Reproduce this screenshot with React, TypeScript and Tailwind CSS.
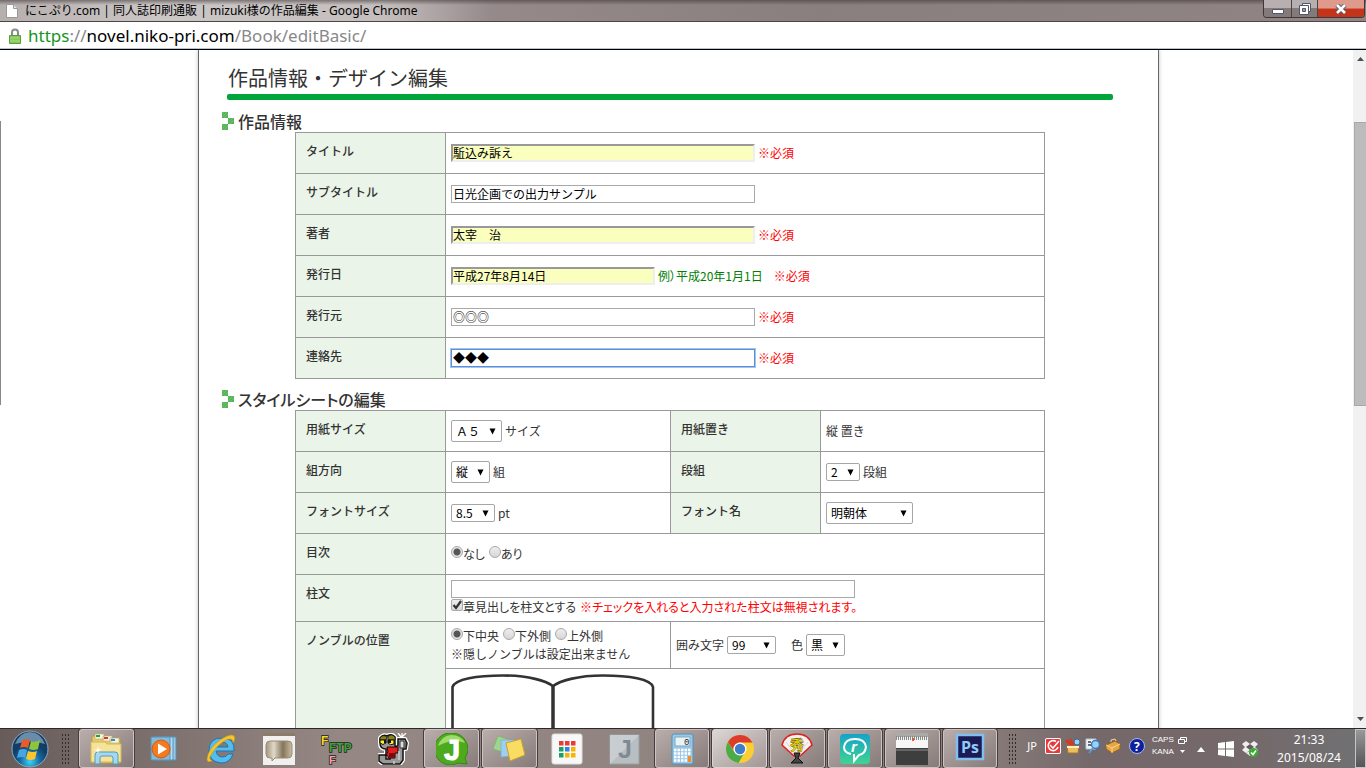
import { useState, type ReactNode } from "react";

const ICON = "h-8 w-8";

function FieldRow({ id, label, children }: { id: string; label: string; children: ReactNode }) {
	return (
		<tr className="h-[41px]">
			<HeadCell htmlFor={id}>{label}</HeadCell>
			<td className="border border-[#999] px-[5px] py-0">
				<div className="flex items-center gap-[3px]">{children}</div>
			</td>
		</tr>
	);
}

function HeadCell({ children, htmlFor, rowSpan }: { children: ReactNode; htmlFor?: string; rowSpan?: number }) {
	return (
		<th
			scope="row"
			rowSpan={rowSpan}
			className="border border-[#999] bg-[#ebf4e8] px-[10px] pt-[9px] text-left align-top font-medium"
		>
			{htmlFor ? <label htmlFor={htmlFor}>{children}</label> : children}
		</th>
	);
}

const Required = () => <span className="text-[#f00]">※必須</span>;

interface TextFieldProps {
	id: string;
	value: string;
	variant?: "plain" | "filled" | "focused";
	width?: string;
}

function TextField({ id, value, variant = "plain", width = "w-[304px]" }: TextFieldProps) {
	const look = {
		plain: "border border-[#a9a9a9] bg-white px-px pb-px",
		filled: "border-2 border-t-[#999] border-l-[#999] border-r-[#eee] border-b-[#eee] bg-[#faffbd] pb-px",
		focused: "border border-[#5b8ddb] bg-white px-px pb-px shadow-[0_0_0_1px_#a3c3f3]",
	}[variant];
	return (
		<input
			id={id}
			type="text"
			defaultValue={value}
			className={`block h-[18px] ${width} ${look} text-xs leading-[13px] text-black outline-none`}
		/>
	);
}

interface PickProps {
	id: string;
	options: string[];
	className: string;
}

// Native select with its own arrow
function Pick({ id, options, className }: PickProps) {
	return (
		<span className="relative inline-block">
			<select
				id={id}
				className={`block appearance-none rounded-[2px] border border-[#a6a6a6] bg-white py-0 pl-1 text-xs leading-4 text-black ${className}`}
			>
				{options.map((o) => (
					<option key={o}>{o}</option>
				))}
			</select>
			<svg className="pointer-events-none absolute inset-y-0 right-[6px] my-auto h-[7px] w-[7px]" viewBox="0 0 7 7">
				<path d="M0.500 0.500h6L3.500 6.500z" fill="#000" />
			</svg>
		</span>
	);
}

function Radio({ name, label, checked }: { name: string; label: string; checked?: boolean }) {
	return (
		<label className="flex items-start">
			<input
				type="radio"
				name={name}
				defaultChecked={checked}
				className="mt-px h-3 w-3 appearance-none rounded-full border border-[#aaa] bg-linear-to-b from-[#eee] to-[#d6d6d6] checked:bg-[radial-gradient(circle,#555_0_3px,#e2e2e2_4px)]"
			/>
			{label}
		</label>
	);
}

function SectionTitle({ children }: { children: ReactNode }) {
	return (
		<h2 className="ml-[23px] flex h-[22px] items-center gap-1 text-base leading-[22px] font-medium">
			<svg width="12" height="18" viewBox="0 0 12 18">
				<path d="M0 0h6v6H0zM6 6h6v6H6zM0 12h6v6H0z" fill="#55b357" />
				<path d="M0 2l2-2M0 5l5-5M2 6l4-4M6 8l2-2M6 11l5-5M8 12l4-4M0 14l2-2M0 17l5-5M2 18l4-4" stroke="#79c878" strokeWidth=".7" />
			</svg>
			<span className="[font-feature-settings:'palt']">{children}</span>
		</h2>
	);
}

function TitleBar() {
	return (
		<header className="flex h-[22px] shrink-0 items-start border-b border-[#4b4545] bg-[linear-gradient(to_bottom,rgba(60,50,50,.55),rgba(255,255,255,0)_5px),linear-gradient(to_right,#b5afae,#cbc7c6_12%,#c4bfbe_28%,#95898a_36%,#8a7f7f_60%,#908484)]">
			<svg className="mt-1 ml-[6px] h-[14px] w-3" viewBox="0 0 12 14">
				<path d="M.5.5h7l4 4v9H.5z" fill="#fff" stroke="#999" />
				<path d="M7.5.5v4h4" fill="#e5e5e5" stroke="#999" />
			</svg>
			<h1 className="ml-[7px] flex-1 text-xs leading-[21px] text-black [font-family:'Noto_Sans','Noto_Sans_CJK_JP',sans-serif]">
				にこぷり.com | 同人誌印刷通販 | mizuki様の作品編集 - Google Chrome
			</h1>
			<div className="mr-px flex h-[18px] overflow-hidden rounded-b-[4px] border border-t-0 border-[#3f3838]">
				<button aria-label="最小化" className="flex w-[28px] items-center justify-center border-r border-[#4c4444] bg-linear-to-b from-[#b8b0b0] from-50% to-[#857a7a] to-50%">
					<svg width="12" height="12" viewBox="0 0 12 12">
						<path d="M.5 6.5h11v4H.5z" fill="#fff" stroke="#51576c" />
					</svg>
				</button>
				<button aria-label="元に戻す" className="flex w-[26px] items-center justify-center border-r border-[#4c4444] bg-linear-to-b from-[#b8b0b0] from-50% to-[#857a7a] to-50%">
					<svg width="12" height="12" viewBox="0 0 12 12">
						<path d="M3.500.5h8v8h-8z" fill="#fff" stroke="#51576c" />
						<path d="M.5 2.500h9v9h-9z" fill="#fff" stroke="#51576c" />
						<path d="M3.500 5.500h3v3h-3z" fill="#a8a0a5" stroke="#51576c" />
					</svg>
				</button>
				<button aria-label="閉じる" className="flex w-[46px] items-center justify-center bg-linear-to-b from-[#e09a8c] from-45% to-[#c4341a] to-55%">
					<svg width="12" height="10" viewBox="0 0 12 10">
						<path d="M2 1l8 8M10 1L2 9" stroke="#51576c" strokeWidth="4.500" />
						<path d="M2 1l8 8M10 1L2 9" stroke="#fff" strokeWidth="2.600" />
					</svg>
				</button>
			</div>
		</header>
	);
}

function AddressBar() {
	return (
		<div className="flex h-7 shrink-0 items-center border-b border-black bg-white pl-[9px] text-[17px] leading-[26px] text-[#888] shadow-[inset_0_-1px_0_#b9c3d2] [font-family:'Noto_Sans',sans-serif]">
			<svg className="mr-[7px] h-4 w-3" viewBox="0 0 12 16">
				<path d="M3 8V4.500a3 3 0 0 1 6 0V8" fill="none" stroke="#8a8a8a" strokeWidth="2" />
				<path d="M.5 7.500h11v8H.5z" fill="#86c95b" stroke="#5f9c3c" />
				<path d="M1 10h10M1 13h10" stroke="#a4dc80" />
			</svg>
			<p>
				<span className="text-[#12951d]">https</span>://<span className="text-black">novel.niko-pri.com</span>/Book/editBasic/
			</p>
		</div>
	);
}

function ScrollBar() {
	return (
		<div className="flex w-[13px] shrink-0 flex-col bg-[#f1f1f1]">
			<svg className="mt-[7px] ml-1 h-1 w-[7px]" viewBox="0 0 7 4">
				<path d="M0 4L3.500 0 7 4z" fill="#505050" />
			</svg>
			<div className="mt-[61px] ml-px h-[284px] border border-r-0 border-[#a8a8a8] bg-[#bcbcbc]" />
			<svg className="mt-auto mb-[7px] ml-1 h-1 w-[7px]" viewBox="0 0 7 4">
				<path d="M0 0h7L3.500 4z" fill="#505050" />
			</svg>
		</div>
	);
}

function BookInfo() {
	return (
		<table className="ml-[96px] w-[750px] table-fixed border-collapse">
			<colgroup>
				<col className="w-[150px]" />
				<col />
			</colgroup>
			<tbody>
				<FieldRow id="title" label="タイトル">
					<TextField id="title" value="駈込み訴え" variant="filled" />
					<Required />
				</FieldRow>
				<FieldRow id="subtitle" label="サブタイトル">
					<TextField id="subtitle" value="日光企画での出力サンプル" />
				</FieldRow>
				<FieldRow id="author" label="著者">
					<TextField id="author" value="太宰　治" variant="filled" />
					<Required />
				</FieldRow>
				<FieldRow id="date" label="発行日">
					<TextField id="date" value="平成27年8月14日" variant="filled" width="w-[204px]" />
					<span className="mr-2 text-[#008000] [font-feature-settings:'palt']">例）平成20年1月1日</span>
					<Required />
				</FieldRow>
				<FieldRow id="publisher" label="発行元">
					<TextField id="publisher" value="◎◎◎" />
					<Required />
				</FieldRow>
				<FieldRow id="contact" label="連絡先">
					<TextField id="contact" value="◆◆◆" variant="focused" />
					<Required />
				</FieldRow>
			</tbody>
		</table>
	);
}

function StyleSheetForm() {
	const [useHeading, setUseHeading] = useState(true);
	const cell = "border border-[#999] px-[5px] py-0";
	const line = "flex items-center gap-[3px]";

	return (
		<table className="ml-[96px] w-[750px] table-fixed border-collapse">
			<colgroup>
				<col className="w-[150px]" />
				<col className="w-[225px]" />
				<col className="w-[150px]" />
				<col />
			</colgroup>
			<tbody>
				<tr className="h-[41px]">
					<HeadCell htmlFor="paper">用紙サイズ</HeadCell>
					<td className={cell}>
						<div className={line}>
							<Pick id="paper" options={["Ａ５", "Ａ６", "Ｂ５"]} className="h-[22px] w-[51px]" />
							サイズ
						</div>
					</td>
					<HeadCell>用紙置き</HeadCell>
					<td className={cell}>縦 置き</td>
				</tr>
				<tr className="h-[41px]">
					<HeadCell htmlFor="direction">組方向</HeadCell>
					<td className={cell}>
						<div className={line}>
							<Pick id="direction" options={["縦", "横"]} className="h-[22px] w-[39px]" />
							組
						</div>
					</td>
					<HeadCell htmlFor="columns">段組</HeadCell>
					<td className={cell}>
						<div className={line}>
							<Pick id="columns" options={["2", "1"]} className="h-[18px] w-[34px]" />
							段組
						</div>
					</td>
				</tr>
				<tr className="h-[41px]">
					<HeadCell htmlFor="size">フォントサイズ</HeadCell>
					<td className={cell}>
						<div className={line}>
							<Pick id="size" options={["8.5", "9", "10"]} className="h-[18px] w-[44px]" />
							pt
						</div>
					</td>
					<HeadCell htmlFor="font">フォント名</HeadCell>
					<td className={cell}>
						<div className={line}>
							<Pick id="font" options={["明朝体", "ゴシック体"]} className="h-[22px] w-[87px]" />
						</div>
					</td>
				</tr>
				<tr className="h-[41px]">
					<HeadCell>目次</HeadCell>
					<td colSpan={3} className={cell}>
						<div className="flex gap-1 [font-feature-settings:'palt']">
							<Radio name="toc" label="なし" checked />
							<Radio name="toc" label="あり" />
						</div>
					</td>
				</tr>
				<tr className="h-[47px]">
					<HeadCell htmlFor="header">柱文</HeadCell>
					<td colSpan={3} className={cell}>
						<TextField id="header" value="" width="w-[404px]" />
						<div className="flex gap-1 [font-feature-settings:'palt']">
							<label className="flex items-start">
								<span className="relative mt-px flex">
									<input
										type="checkbox"
										checked={useHeading}
										onChange={() => setUseHeading(!useHeading)}
										className="h-3 w-3 appearance-none rounded-[2px] border border-[#aaa] bg-linear-to-b from-[#eee] to-[#d8d8d8]"
									/>
									{useHeading && (
										<svg className="pointer-events-none absolute inset-0 h-3 w-3" viewBox="0 0 12 12">
											<path d="M2.500 6l2.500 3L10 2" fill="none" stroke="#333" strokeWidth="2.200" />
										</svg>
									)}
								</span>
								章見出しを柱文とする
							</label>
							<span className="text-[#f00]">※チェックを入れると入力された柱文は無視されます。</span>
						</div>
					</td>
				</tr>
				<tr className="h-[47px]">
					<HeadCell rowSpan={2}>ノンブルの位置</HeadCell>
					<td className={cell}>
						<div className="flex gap-1">
							<Radio name="folio" label="下中央" checked />
							<Radio name="folio" label="下外側" />
							<Radio name="folio" label="上外側" />
						</div>
						<p>※隠しノンブルは設定出来ません</p>
					</td>
					<td colSpan={2} className={cell}>
						<div className={line}>
							<label htmlFor="frame">囲み文字</label>
							<Pick id="frame" options={["99", "-99-"]} className="h-[18px] w-[49px]" />
							<label htmlFor="color" className="ml-3">色</label>
							<Pick id="color" options={["黒", "白"]} className="h-[22px] w-[39px]" />
						</div>
					</td>
				</tr>
				<tr>
					<td colSpan={3} className="border border-[#999] p-[5px]">
						<svg width="204" height="150" viewBox="0 0 204 150" fill="none" stroke="#333" strokeWidth="2.600">
							<path d="M1.500 148V13C4 5 26 1.500 52 1.500S95 7 102 12c7-5 24-10.500 50-10.500S200 5 202 13v135z" />
							<path d="M102 12v136" strokeWidth="3.500" />
						</svg>
					</td>
				</tr>
			</tbody>
		</table>
	);
}

function ExplorerIcon() {
	return (
		<svg className={ICON} viewBox="0 0 32 32">
			<path d="M2 3h9l2 2h17v25H2z" fill="#e7ca6a" stroke="#b99b45" />
			<path d="M5 1h9v5H5zM13 3h9v5h-9zM20 5h9v5h-9z" fill="#f8f4dc" stroke="#baa869" strokeWidth=".6" />
			<path d="M6 2h4v2H6z" fill="#20a43a" />
			<path d="M14 4h4v2h-4z" fill="#d8392b" />
			<path d="M21 6h4v2h-4z" fill="#2c8ed8" />
			<path d="M1 9h14l2 2h14v18H1z" fill="#f7e398" stroke="#d2b65c" />
			<path d="M5 31V22q0-3 3-3h17q3 0 3 3v9h-5v-6q0-2-2-2H12q-2 0-2 2v6z" fill="#a5d8ef" stroke="#4d9dc4" />
			<path d="M8 13l.8 3.200L12 17l-3.200.8L8 21l-.8-3.200L4 17l3.200-.8z" fill="#fff" />
		</svg>
	);
}

function MediaIcon() {
	return (
		<svg className={ICON} viewBox="0 0 32 32">
			<path d="M9 4h19v23H9z" fill="#9dc7df" stroke="#5592b6" />
			<path d="M6 4h19v23H6z" fill="#b9dcee" stroke="#5592b6" />
			<path d="M3 4h19v23H3z" fill="#86b9d6" stroke="#5592b6" />
			<circle cx="13" cy="16" r="9" fill="#f47a20" stroke="#d35a10" />
			<path d="M10 10.500v11l9-5.500z" fill="#fff" />
		</svg>
	);
}

function ExplorerEIcon() {
	return (
		<svg className={ICON} viewBox="0 0 32 32">
			<path d="M29 18H11q1 6 6.500 6 4 0 5.500-3h5q-3 9-11.500 9Q4 29 4 17.500 4 5 17 5q13 0 12 13zM11 14h12q-1-5-6-5t-6 5z" fill="#55bdee" stroke="#1878b8" />
			<path d="M7 28q-5 2-5-2Q3 16 15 7q11-7 14-4 2 2-1 7 0-6-7-3Q10 13 5 24q-1 2 2 4z" fill="#f5c62c" stroke="#cd9310" strokeWidth=".6" />
		</svg>
	);
}

function BubbleIcon() {
	return (
		<svg className={ICON} viewBox="0 0 32 32">
			<defs>
				<linearGradient id="bubble">
					<stop stopColor="#a3947e" />
					<stop offset=".3" stopColor="#e0d8c8" />
					<stop offset=".65" stopColor="#85745b" />
					<stop offset="1" stopColor="#c9bca6" />
				</linearGradient>
			</defs>
			<path d="M0 0h32v32H0z" fill="#f1f0ef" />
			<path d="M0 0h32v3H0z" fill="#8b7b69" />
			<path d="M7 8h18q4 0 4 4v9q0 4-4 4H12l-3 3v-3H7q-4 0-4-4v-9q0-4 4-4z" fill="url(#bubble)" stroke="#998b76" />
		</svg>
	);
}

function FtpIcon() {
	return (
		<svg className={ICON} viewBox="0 0 32 32" fontFamily="Liberation Sans" fontWeight="bold" stroke="#222" paintOrder="stroke" strokeWidth="1.500">
			<text x="0" y="12" fontSize="12" fill="#f6dc20">F</text>
			<text x="8" y="19" fontSize="12" fill="#3aa535">FTP</text>
			<text x="8" y="31" fontSize="11" fill="#f3a1ab">F</text>
		</svg>
	);
}

function WormIcon() {
	return (
		<svg className={ICON} viewBox="0 0 32 32">
			<path d="M2 5q3-4 7-2 5-3 8 1v9q2 1 3-1V6h7l2 4-1 6h-3v11l-3 4H5l-4-3v-6h7v4h4v-4H8v-6q-6 0-6-6z" fill="#999" stroke="#fff" strokeWidth="4" strokeLinejoin="round" />
			<path d="M2 5q3-4 7-2 5-3 8 1v9q2 1 3-1V6h7l2 4-1 6h-3v11l-3 4H5l-4-3v-6h7v4h4v-4H8v-6q-6 0-6-6z" fill="#999" stroke="#111" strokeWidth="1.500" />
			<path d="M2 5q3-4 7-1l-1 3H2zM10 4q3-4 7 0v3h-7z" fill="#8b8413" stroke="#111" strokeWidth=".7" />
			<path d="M2 7h6v3q-3 3-6 0zM10 7h6v4q-4 2-6-1z" fill="#fff12a" stroke="#111" />
			<path d="M6 7h2v3H6zM10 7h3v3h-3z" fill="#111" />
			<path d="M9 14h11v6h-3v5h-7v-2l-2-1 2-3z" fill="#e22020" stroke="#300" />
			<path d="M11 20h6v4h-6z" fill="#770c0c" />
			<path d="M20 0l3 4M28 0l-4 4M24 0v5" stroke="#fff" strokeWidth="1.300" />
			<path d="M22 8h4v7h-4zM20 9v5M28 9v5" fill="#ddd" stroke="#333" />
			<path d="M21 18v9M16 28v3" stroke="#ccc" strokeWidth="1.500" />
		</svg>
	);
}

function GreenJIcon() {
	return (
		<svg className={ICON} viewBox="0 0 32 32">
			<path d="M16 0a16 16 0 1 0 6 30l9 1-2-6A16 16 0 0 0 16 0z" fill="#4daa1f" stroke="#39870f" />
			<path d="M2 13Q5 3 15 2q10 0 14 8-12-5-27 3z" fill="#9ddb6a" />
			<text x="8" y="27" fontSize="29" fontFamily="Liberation Sans" fontWeight="bold" fill="#fff" stroke="#fff">J</text>
		</svg>
	);
}

function NotesIcon() {
	return (
		<svg className={ICON} viewBox="0 0 32 32">
			<path d="M5 3l12 4-4 13-13-4z" fill="#9fd68e" stroke="#74ae64" strokeWidth=".6" />
			<path d="M8 7h14v16l-14 1z" fill="#9fcff0" stroke="#6fa9d0" strokeWidth=".6" />
			<path d="M13 10l15-4 4 16-15 6z" fill="#f8dd62" stroke="#ca9f32" />
		</svg>
	);
}

function AppsIcon() {
	const colors = ["#ea3a34", "#ea3a34", "#ea3a34", "#1aa260", "#2a85e8", "#f8b400", "#1aa260", "#f8b400", "#f8b400"];
	return (
		<svg className={ICON} viewBox="0 0 32 32">
			<rect x="1" y="1" width="30" height="30" rx="2" fill="#f8f8f8" stroke="#ddd" />
			{colors.map((c, i) => (
				<rect key={i} x={8 + (i % 3) * 6} y={8 + Math.floor(i / 3) * 6} width="4.500" height="4.500" fill={c} />
			))}
		</svg>
	);
}

function GrayJIcon() {
	return (
		<svg className={ICON} viewBox="0 0 32 32">
			<path d="M2 2h29v29H2z" fill="#b8bec2" stroke="#9aa0a4" />
			<path d="M2 2h29L2 31z" fill="#c8cdd1" />
			<text x="10" y="25" fontSize="25" fontFamily="Liberation Sans" fontWeight="bold" fill="#7f8a92">J</text>
		</svg>
	);
}

function CalcIcon() {
	return (
		<svg className={ICON} viewBox="0 0 32 32">
			<rect x="6" y="1" width="21" height="30" rx="2" fill="#9cc8e6" stroke="#5390bb" />
			<path d="M9 4h15v9H9z" fill="#eaf3f3" stroke="#78a8c5" />
			<text x="18" y="12" fontSize="9" fontFamily="Liberation Mono" fill="#223">0</text>
			<path d="M8 17h17M8 20.500h17M8 24h17M8 27.500h14" stroke="#fff" strokeWidth="2.500" strokeDasharray="2.500 1" />
			<path d="M22 23h3v6h-3z" fill="#f09020" />
		</svg>
	);
}

function ChromeIcon() {
	return (
		<svg className={ICON} viewBox="0 0 32 32">
			<circle cx="16" cy="16" r="14" fill="#fbce32" />
			<path d="M3.900 9A14 14 0 0 1 28.500 9.500H16a6.500 6.500 0 0 0-6.300 8z" fill="#dd3b2d" />
			<path d="M3.900 9a14 14 0 0 0 10.600 21l6-10.500a6.500 6.500 0 0 1-10.500-1z" fill="#4aab48" />
			<circle cx="16" cy="16" r="6.500" fill="#fff" />
			<circle cx="16" cy="16" r="5.200" fill="#3d7dcb" />
		</svg>
	);
}

function FanIcon() {
	return (
		<svg className={ICON} viewBox="0 0 32 32">
			<path d="M1 12Q4 1 16 1t15 11L19 23h-6z" fill="#f7f1f1" stroke="#d22" strokeWidth="1.500" />
			<path d="M16 23L5 9M16 23L10 5M16 23V4M16 23l6-18M16 23L27 9" stroke="#ccc" strokeWidth=".7" />
			<path d="M13 20h6l-2 5 5 5H10l5-5z" fill="#444" stroke="#111" />
			<text x="9" y="17" fontSize="14" fontFamily="Noto Sans CJK JP" fontWeight="bold" fill="#f2df00" stroke="#554800" strokeWidth=".4">秀</text>
		</svg>
	);
}

function RealIcon() {
	return (
		<svg className={ICON} viewBox="0 0 32 32">
			<defs>
				<linearGradient id="teal" x2="0" y2="1">
					<stop stopColor="#16a3c8" />
					<stop offset="1" stopColor="#40d392" />
				</linearGradient>
			</defs>
			<rect x="1" y="1" width="30" height="30" rx="4" fill="url(#teal)" />
			<path d="M12 21Q5 20 5 14q1-8 11-8t11 8q-1 7-7 8l-5 6v-7" fill="none" stroke="#fff" strokeWidth="2" />
			<text x="12" y="19" fontSize="15" fontFamily="Liberation Sans" fontStyle="italic" fontWeight="bold" fill="#fff">r</text>
		</svg>
	);
}

function RulerIcon() {
	return (
		<svg className={ICON} viewBox="0 0 32 32">
			<path d="M0 0h32v15H0z" fill="#f7f7f7" />
			<path d="M0 0h32v4H0z" fill="#aaa" />
			<path d="M0 5h32" stroke="#888" strokeWidth="4" strokeDasharray="1 1" />
			<path d="M16 5h2v3h-2z" fill="#e65a2a" />
			<path d="M0 15h32v17H0z" fill="#3e3e3e" />
			<path d="M0 16h32v2H0z" fill="#666" />
		</svg>
	);
}

function PsIcon() {
	return (
		<svg className={ICON} viewBox="0 0 32 32">
			<path d="M3 2h26v24H3z" fill="#1b1a55" stroke="#7fc0f0" strokeWidth="2.500" />
			<text x="7" y="20" fontSize="16" fontFamily="Open Sans" fontWeight="bold" fill="#8ecbf5">Ps</text>
		</svg>
	);
}

const apps: { name: string; icon: () => ReactNode; state?: "open" | "active" }[] = [
	{ name: "エクスプローラー", icon: ExplorerIcon, state: "open" },
	{ name: "Media Player", icon: MediaIcon },
	{ name: "Internet Explorer", icon: ExplorerEIcon },
	{ name: "吹き出し", icon: BubbleIcon },
	{ name: "FFFTP", icon: FtpIcon },
	{ name: "エディタ", icon: WormIcon },
	{ name: "Jane", icon: GreenJIcon, state: "open" },
	{ name: "付箋", icon: NotesIcon, state: "open" },
	{ name: "アプリ", icon: AppsIcon },
	{ name: "J", icon: GrayJIcon },
	{ name: "電卓", icon: CalcIcon, state: "open" },
	{ name: "Chrome", icon: ChromeIcon, state: "active" },
	{ name: "秀丸", icon: FanIcon, state: "open" },
	{ name: "リアル", icon: RealIcon, state: "open" },
	{ name: "ルーラー", icon: RulerIcon, state: "open" },
	{ name: "Photoshop", icon: PsIcon, state: "open" },
];

function Grip() {
	return <div className="mt-1 h-8 w-[9px] bg-[radial-gradient(circle,#332b2b_1px,transparent_1px)] bg-size-[3px_4px]" />;
}

function TaskBar() {
	const look = {
		none: "border-transparent",
		open: "border-[#cdc3c2] bg-linear-to-br from-[#b9aeac] to-[#877b79] shadow-[0_0_0_1px_#463e3e]",
		active: "border-[#ddd5d4] bg-linear-to-br from-[#dcd7d6] to-[#a29694] shadow-[0_0_0_1px_#463e3e]",
	};
	return (
		<footer className="flex h-10 shrink-0 border-t border-[#2d2727] bg-[linear-gradient(to_right,#685c5a,#958884_25%,#8c807d_70%,#75686a_80%,#75686a_90%,#707173)] text-white">
			<button aria-label="スタート" className="ml-[11px]">
				<svg width="38" height="38" viewBox="0 0 38 38">
					<defs>
						<radialGradient id="orb" cy=".85">
							<stop stopColor="#3dd4f6" />
							<stop offset=".55" stopColor="#176aa3" />
							<stop offset="1" stopColor="#123d65" />
						</radialGradient>
					</defs>
					<circle cx="19" cy="19" r="18" fill="url(#orb)" stroke="#8aabc0" />
					<path d="M4 14Q9 2 19 2t15 12q-14-5-30 0z" fill="#a4c1d5" opacity=".6" />
					<path d="M11 11q4-3 8-1l-2 8q-4-2-8 0z" fill="#ee5a25" />
					<path d="M20 11q4 2 9-1l-2 9q-4 2-9 0z" fill="#8cc63c" />
					<path d="M8 20q4-2 8 0l-2 8q-3-2-8 0z" fill="#4aa4e2" />
					<path d="M17 21q5 2 9 0l-2 8q-4 2-9 0z" fill="#fbc62c" />
				</svg>
			</button>
			<div className="ml-3">
				<Grip />
			</div>
			<nav className="ml-[9px] flex min-w-0 flex-1 gap-[3px]">
				{apps.map(({ name, icon: Icon, state }) => (
					<button
						key={name}
						aria-label={name}
						className={`flex flex-1 items-center justify-center rounded-[3px] border ${look[state ?? "none"]}`}
					>
						<Icon />
					</button>
				))}
			</nav>
			<div className="ml-[11px] flex items-start [font-family:'Noto_Sans',sans-serif]">
				<Grip />
				<span className="ml-[10px] pt-[9px] text-[11px] leading-4">JP</span>
				<div className="mt-[9px] ml-2 flex gap-1">
					<svg width="16" height="16" viewBox="0 0 16 16">
						<rect width="16" height="16" rx="2" fill="#fff" />
						<rect x="1" y="1" width="14" height="14" rx="1" fill="#e8383a" />
						<path d="M11 3.500A5 5 0 1 0 13 9M5 7l3 3 6-7" fill="none" stroke="#fff" strokeWidth="1.600" />
					</svg>
					<svg width="16" height="16" viewBox="0 0 16 16">
						<path d="M1 2l6 6M5 1l4 7" stroke="#d83820" strokeWidth="2.500" />
						<path d="M2 8h12l-1 7H3z" fill="#eebd60" stroke="#a87628" />
						<circle cx="12" cy="4" r="3" fill="#9ed0f4" stroke="#376c9e" />
						<path d="M2 9h12" stroke="#fff0bc" strokeWidth="2" />
					</svg>
					<svg width="16" height="16" viewBox="0 0 16 16">
						<path d="M1 1h10v10H1z" fill="#f3f3f3" stroke="#b8c4d4" />
						<path d="M3 4h3M3 7h3" stroke="#345" strokeWidth="1.500" />
						<circle cx="10.500" cy="6.500" r="4" fill="#9cd1f5" stroke="#387bb8" strokeWidth="1.500" />
						<path d="M8 10l-4 5" stroke="#5a9ad6" strokeWidth="2" />
					</svg>
					<svg width="16" height="16" viewBox="0 0 16 16">
						<path d="M1 7l9-4 5 3v5l-8 4-6-4z" fill="#e6a544" stroke="#95601f" />
						<path d="M1 7l6 3 8-4M7 10v5" fill="none" stroke="#f9d995" />
						<path d="M6 4V2l4-1 1 2" fill="none" stroke="#f9d995" />
					</svg>
					<svg className="ml-1" width="16" height="16" viewBox="0 0 16 16">
						<circle cx="8" cy="8" r="7.500" fill="#0d219b" stroke="#a9b8ed" />
						<text x="5" y="12.500" fontSize="12" fontWeight="bold" fill="#fff">?</text>
					</svg>
				</div>
				<div className="mt-[5px] ml-[7px] flex w-[22px] flex-col text-[8px] leading-3 [font-family:'Liberation_Sans',sans-serif]">
					<span>CAPS</span>
					<span>KANA</span>
				</div>
				<svg className="mt-2 ml-1" width="9" height="18" viewBox="0 0 9 18" fill="none" stroke="#fff">
					<path d="M2.500 2.500v-2h6v4h-2M.5 2.500h6v4h-6z" />
					<path d="M2 13h5l-2.500 3z" fill="#fff" stroke="none" />
				</svg>
				<svg className="mt-[18px] ml-[10px]" width="8" height="5" viewBox="0 0 8 5">
					<path d="M0 5l4-5 4 5z" fill="#fff" />
				</svg>
				<svg className="mt-3 ml-[13px]" width="16" height="16" viewBox="0 0 16 16" fill="#fff">
					<path d="M0 2l7-1v6.500H0zM8 1l8-1v7.500H8zM0 8.500h7V15l-7-1zM8 8.500h8V16l-8-1z" />
				</svg>
				<svg className="mt-3 ml-2" width="16" height="16" viewBox="0 0 16 16">
					<path d="M4 0l4 3 4-3 4 3-3 3 3 3-4 3-4-3-4 3-4-3 3-3-3-3zM4 12l4-2 4 2-4 3z" fill="#eee" />
					<path d="M4 6l4-3 4 3-4 3z" fill="#655b5c" />
					<circle cx="11.500" cy="11.500" r="4.500" fill="#3aac35" />
					<path d="M9 11.500l2 2 3-4" fill="none" stroke="#fff" strokeWidth="1.500" />
				</svg>
				<div className="ml-[14px] w-[74px] pt-[2px] text-center text-xs leading-[18px] whitespace-nowrap">
					<p>21:33</p>
					<p>2015/08/24</p>
				</div>
				<button aria-label="デスクトップの表示" className="ml-[9px] h-[39px] w-[11px] border border-[#c5c5c5] bg-linear-to-b from-[#999] to-[#555]" />
			</div>
		</footer>
	);
}

export default function App() {
	return (
		<div className="flex h-screen flex-col overflow-hidden bg-white text-xs leading-[18px] text-[#333] [font-family:'Noto_Sans_CJK_JP',sans-serif]">
			<TitleBar />
			<AddressBar />
			<div className="flex min-h-0 flex-1">
				<div className="w-1 shrink-0 bg-white pt-[71px]">
					<div className="h-[284px] w-px bg-[#888]" />
				</div>
				<main className="min-w-0 flex-1 overflow-hidden">
					<div className="mx-auto min-h-full w-full max-w-[961px] border-x border-[#666] shadow-[0_0_4px_rgba(0,0,0,.25)]">
						<h1 className="ml-[29px] pt-[14px] text-xl leading-7">作品情報・デザイン編集</h1>
						<div className="mt-0.5 mr-[45px] mb-[10px] ml-7 h-[6px] rounded-[2px] bg-[#00a63c]" />
						<SectionTitle>作品情報</SectionTitle>
						<BookInfo />
						<div className="h-[9px]" />
						<SectionTitle>スタイルシートの編集</SectionTitle>
						<StyleSheetForm />
					</div>
				</main>
				<ScrollBar />
			</div>
			<TaskBar />
		</div>
	);
}
